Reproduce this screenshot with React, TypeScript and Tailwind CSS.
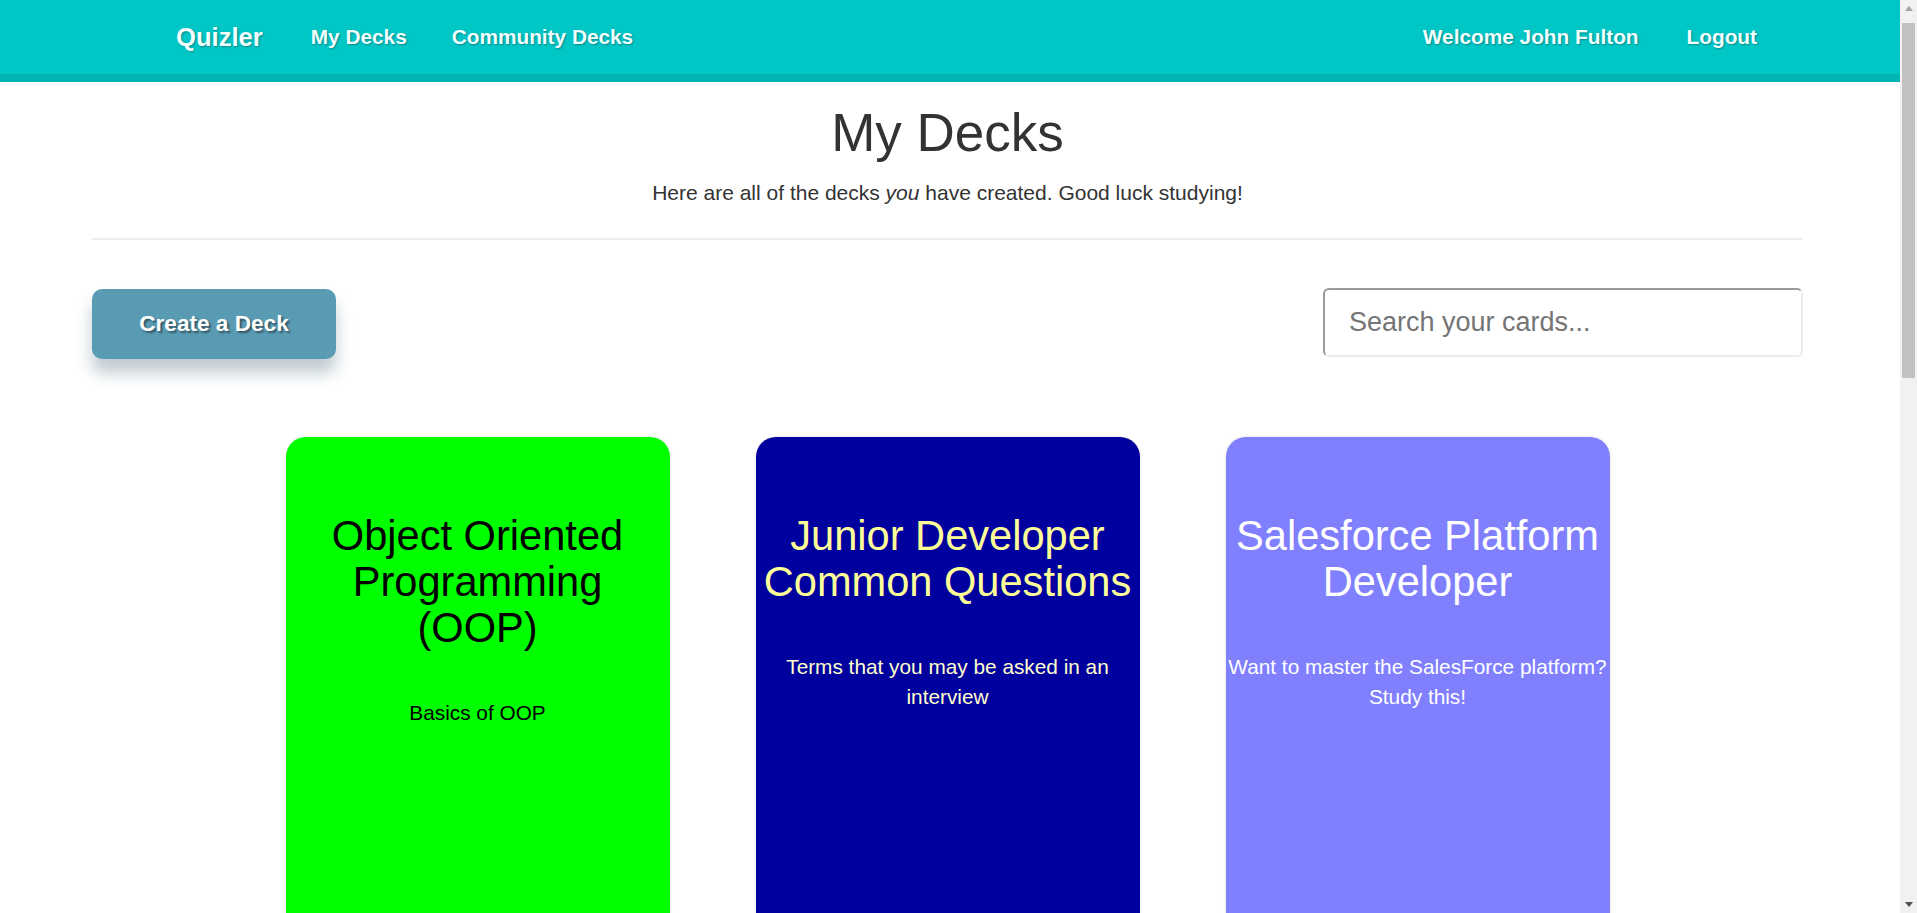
import React from "react";

const decks = [
  {
    title: "Object Oriented Programming (OOP)",
    desc: "Basics of OOP",
    bg: "bg-[#00ff00]",
    titleColor: "text-black",
    descColor: "text-black",
  },
  {
    title: "Junior Developer Common Questions",
    desc: "Terms that you may be asked in an interview",
    bg: "bg-[#00009f]",
    titleColor: "text-[#ffff99]",
    descColor: "text-[#ffffcc]",
  },
  {
    title: "Salesforce Platform Developer",
    desc: "Want to master the SalesForce platform? Study this!",
    bg: "bg-[#8080ff]",
    titleColor: "text-white",
    descColor: "text-white",
  },
];

function FakeScrollbar() {
  return (
    <div className="fixed right-0 top-0 flex h-screen w-[17px] flex-col bg-[#f1f1f1]">
      <div className="flex h-[17px] items-center justify-center">
        <svg width="8" height="5" viewBox="0 0 8 5">
          <path d="M4 0 L8 5 L0 5 Z" fill="#a3a3a3" />
        </svg>
      </div>
      <div className="mx-[2px] mt-[6px] h-[355px] rounded-[1px] bg-[#c1c1c1]" />
      <div className="flex-1" />
      <div className="flex h-[17px] items-center justify-center">
        <svg width="8" height="5" viewBox="0 0 8 5">
          <path d="M0 0 L8 0 L4 5 Z" fill="#505050" />
        </svg>
      </div>
    </div>
  );
}

export default function App() {
  return (
    <div className="min-h-screen bg-white font-['Liberation_Sans',Arial,sans-serif]">
      <div className="mr-[17px]">
        <nav className="flex h-[82px] items-center justify-between border-b-[8px] border-[#00b4b4] bg-[#00c6c6] pl-[176px] pr-[143px] text-[#f3ffff] [text-shadow:1px_1px_2px_rgba(0,0,0,0.3)]">
          <div className="flex items-center">
            <span className="mr-[48px] text-[25.6px] font-bold">Quizler</span>
            <span className="mr-[45px] text-[20.8px] font-bold">My Decks</span>
            <span className="text-[20.8px] font-bold">Community Decks</span>
          </div>
          <div className="flex items-center gap-[48px]">
            <span className="text-[20.8px] font-bold">Welcome John Fulton</span>
            <span className="text-[20.8px] font-bold">Logout</span>
          </div>
        </nav>

        <main className="pl-[92px] pr-[97px]">
          <h1 className="mt-[19px] text-center text-[53px] leading-[64px] text-[#333333]">My Decks</h1>
          <p className="mt-[12px] text-center text-[21px] leading-[31.5px] text-[#333333]">
            Here are all of the decks <em>you</em> have created. Good luck studying!
          </p>
          <div className="mt-[29px] h-[2px] bg-[#eeeeee]" />

          <div className="mt-[49px] flex items-start justify-between">
            <button className="h-[70px] w-[244px] rounded-[10px] bg-[#5a9bb4] text-[22.6px] font-bold text-white shadow-[0_14px_16px_rgba(30,70,90,0.28)] [text-shadow:2px_2px_2px_rgba(0,0,0,0.45)]">
              Create a Deck
            </button>
            <input
              type="text"
              placeholder="Search your cards..."
              className="mt-[-0.5px] h-[69px] w-[480px] rounded-[6px] border-2 border-b-[#ececec] border-l-[#9a9a9a] border-r-[#ececec] border-t-[#9a9a9a] bg-white pl-[24px] text-[27px] text-[#333] outline-none placeholder:text-[#757575]"
            />
          </div>

          <div className="mt-[78px] flex justify-center gap-[86px] pb-[40px]">
            {decks.map((d) => (
              <div
                key={d.title}
                className={`h-[560px] w-[384px] shrink-0 rounded-[20px] px-[2px] pt-[76px] text-center shadow-[0_0_3px_rgba(0,0,0,0.15)] ${d.bg}`}
              >
                <h2 className={`text-[41.6px] leading-[46px] ${d.titleColor}`}>{d.title}</h2>
                <p className={`mt-[47px] text-[20.8px] leading-[30px] ${d.descColor}`}>{d.desc}</p>
              </div>
            ))}
          </div>
        </main>
      </div>
      <FakeScrollbar />
    </div>
  );
}
